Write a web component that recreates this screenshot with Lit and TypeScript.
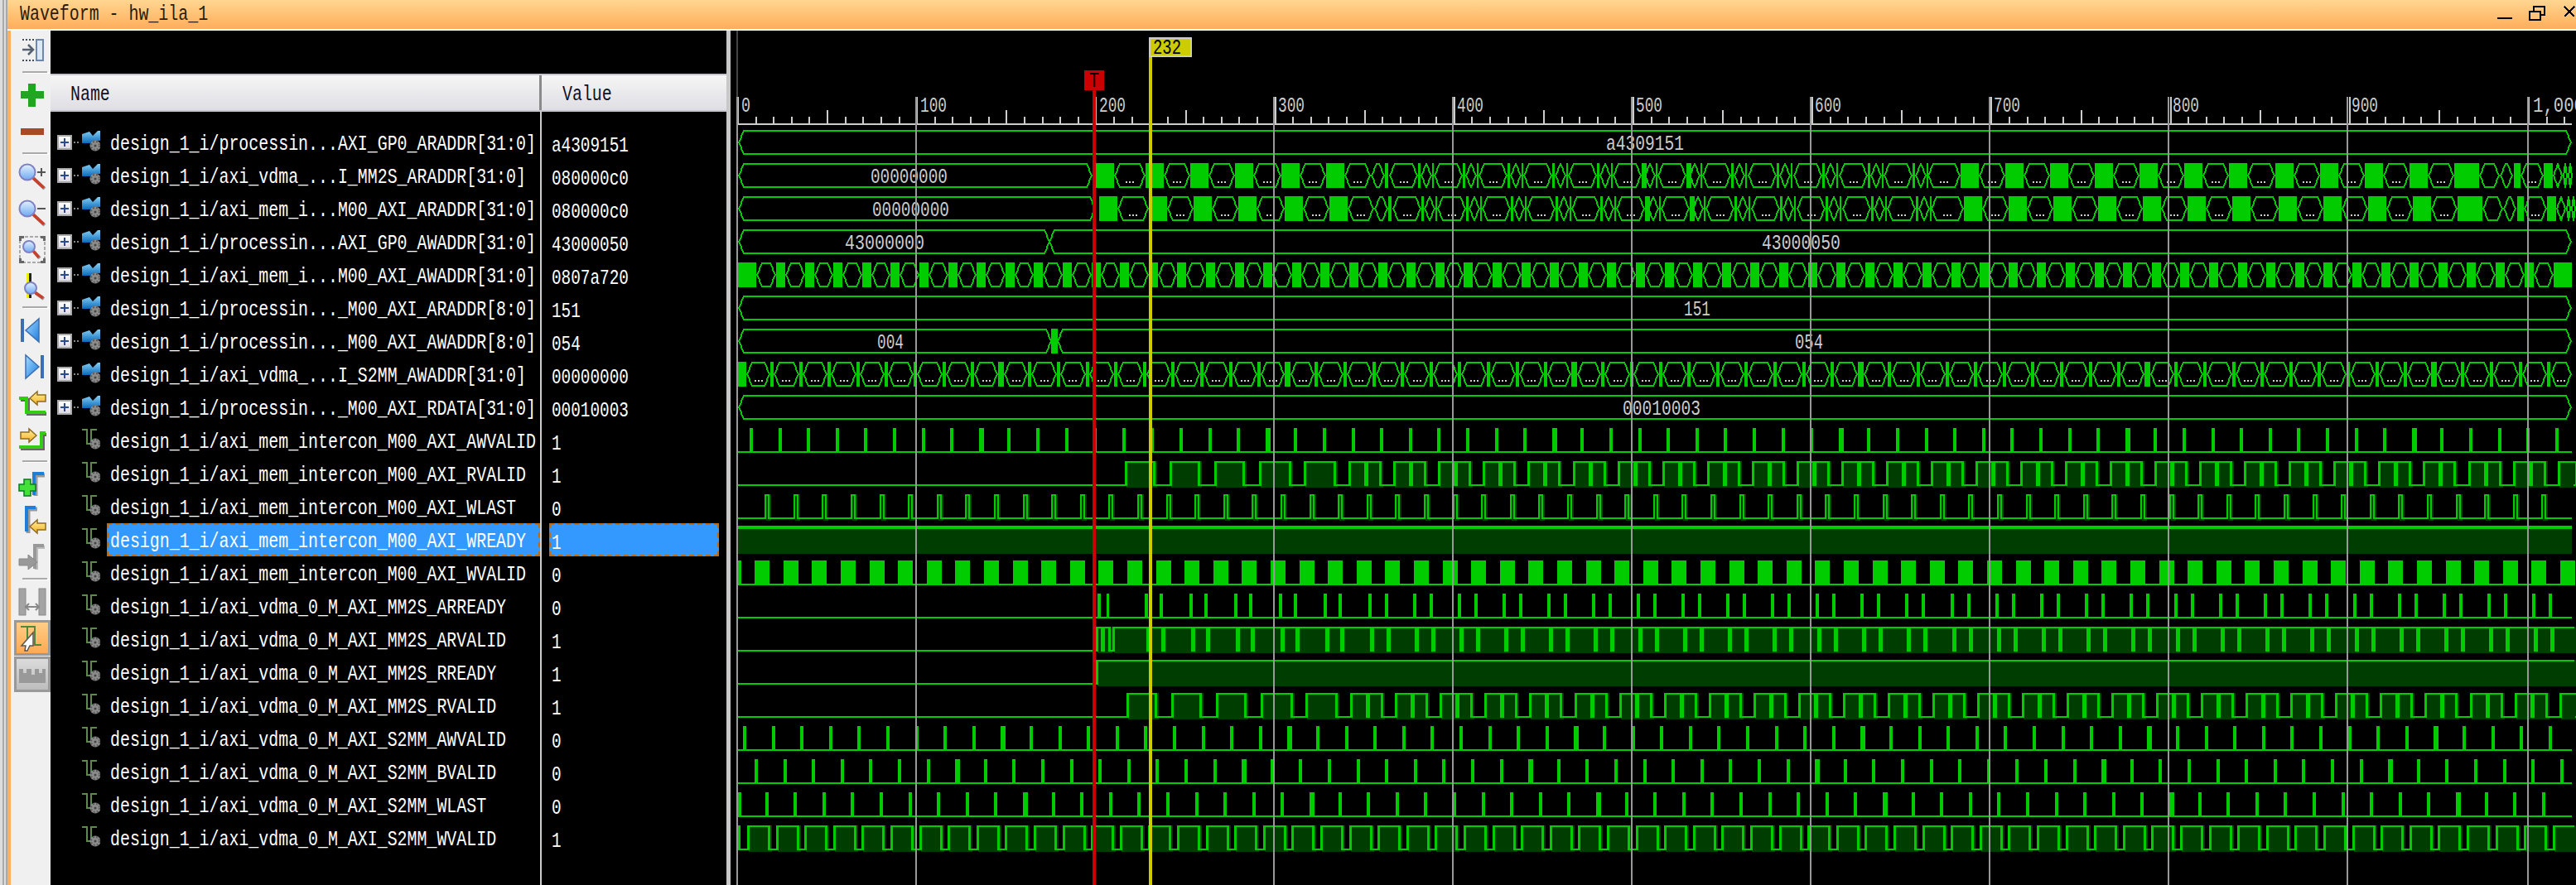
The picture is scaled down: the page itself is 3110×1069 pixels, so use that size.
import { html, svg, css, LitElement, SVGTemplateResult } from "lit";
import { customElement } from "lit/decorators.js";
import { classMap } from "lit/directives/class-map.js";

/* ---------- signal data ---------- */

interface Signal {
  name: string;
  value: string;
  bus?: boolean;
  selected?: boolean;
}

const SIGNALS: Signal[] = [
  { name: "design_1_i/processin...AXI_GP0_ARADDR[31:0]", value: "a4309151", bus: true },
  { name: "design_1_i/axi_vdma_...I_MM2S_ARADDR[31:0]", value: "080000c0", bus: true },
  { name: "design_1_i/axi_mem_i...M00_AXI_ARADDR[31:0]", value: "080000c0", bus: true },
  { name: "design_1_i/processin...AXI_GP0_AWADDR[31:0]", value: "43000050", bus: true },
  { name: "design_1_i/axi_mem_i...M00_AXI_AWADDR[31:0]", value: "0807a720", bus: true },
  { name: "design_1_i/processin..._M00_AXI_ARADDR[8:0]", value: "151", bus: true },
  { name: "design_1_i/processin..._M00_AXI_AWADDR[8:0]", value: "054", bus: true },
  { name: "design_1_i/axi_vdma_...I_S2MM_AWADDR[31:0]", value: "00000000", bus: true },
  { name: "design_1_i/processin..._M00_AXI_RDATA[31:0]", value: "00010003", bus: true },
  { name: "design_1_i/axi_mem_intercon_M00_AXI_AWVALID", value: "1" },
  { name: "design_1_i/axi_mem_intercon_M00_AXI_RVALID", value: "1" },
  { name: "design_1_i/axi_mem_intercon_M00_AXI_WLAST", value: "0" },
  { name: "design_1_i/axi_mem_intercon_M00_AXI_WREADY", value: "1", selected: true },
  { name: "design_1_i/axi_mem_intercon_M00_AXI_WVALID", value: "0" },
  { name: "design_1_i/axi_vdma_0_M_AXI_MM2S_ARREADY", value: "0" },
  { name: "design_1_i/axi_vdma_0_M_AXI_MM2S_ARVALID", value: "1" },
  { name: "design_1_i/axi_vdma_0_M_AXI_MM2S_RREADY", value: "1" },
  { name: "design_1_i/axi_vdma_0_M_AXI_MM2S_RVALID", value: "1" },
  { name: "design_1_i/axi_vdma_0_M_AXI_S2MM_AWVALID", value: "0" },
  { name: "design_1_i/axi_vdma_0_M_AXI_S2MM_BVALID", value: "0" },
  { name: "design_1_i/axi_vdma_0_M_AXI_S2MM_WLAST", value: "0" },
  { name: "design_1_i/axi_vdma_0_M_AXI_S2MM_WVALID", value: "1" },
];

/* ---------- waveform painter: everything is pixel rects, like the original ---------- */

const X0 = 891;
const XEND = 3105;
const P16 = 34.6;
const P25 = 54.05;
const top = (row: number) => 157 + row * 40;

class Painter {
  bright: string[] = [];
  dark: string[] = [];
  dots: string[] = [];
  labels: { row: number; text: string; x: number; w: number }[] = [];

  private rect(to: string[], x: number, y: number, w: number, h: number) {
    const x1 = Math.round(x);
    const x2 = Math.round(x + w);
    if (x2 > x1) to.push(`M${x1} ${y}h${x2 - x1}v${h}h${x1 - x2}z`);
  }
  line(x: number, y: number, w: number, h: number) {
    this.rect(this.bright, x, y, w, h);
  }
  shade(x: number, y: number, w: number, h: number) {
    this.rect(this.dark, x, y, w, h);
  }

  // value segment with tapered, stair-stepped ends
  hex(row: number, a: number, b: number, hasDots = false) {
    const t = top(row);
    const taper = Math.min(6, (b - a) / 2 - 1);
    this.line(a + taper, t, b - a - taper * 2, 2);
    this.line(a + taper, t + 28, b - a - taper * 2, 2);
    for (let y = 2; y < 28; y += 2) {
      const off = Math.round((taper * Math.abs(y - 14)) / 14);
      this.line(a + off, t + y, 2, 2);
      this.line(b - off - 2, t + y, 2, 2);
    }
    if (hasDots) {
      const mid = Math.round((a + b) / 2) - 5;
      for (let i = 0; i < 3; i++) this.rect(this.dots, mid + i * 4, t + 22, 2, 2);
    }
  }
  solid(row: number, a: number, b: number) {
    this.line(a, top(row), b - a, 30);
  }

  // a bit signal from its high spans; the dark shade sits 2px off the line
  bit(row: number, spans: number[][], vw = 3) {
    const t = top(row);
    let prev = X0;
    for (const [a, b] of spans) {
      this.line(prev, t + 28, a - prev, 2);
      this.shade(a + 2, t, b - a + vw, 32);
      this.line(a, t, b - a + vw, 2);
      this.line(a, t, vw, 30);
      if (b < XEND) this.line(b, t, vw, 30);
      prev = b;
    }
    if (prev < XEND) this.line(prev, t + 28, XEND - prev, 2);
  }
  pulses(row: number, base: number, thick: number) {
    const t = top(row);
    this.line(X0, t + 28, XEND - X0, 2);
    for (let k = 0; ; k++) {
      const x = base + k * P16;
      if (x > XEND - 2) break;
      this.line(x - 2, t, k % 10 === thick ? 6 : 4, 30);
    }
  }
}

function busAddr(p: Painter, row: number, d: number) {
  p.hex(row, X0, 1319 + d);
  const first = [1323, 1383, 1437, 1491, 1547, 1601];
  first.forEach((s, i) => {
    p.solid(row, s + d, s + 22 + d);
    p.hex(row, s + 22 + d, (first[i + 1] ?? 1655) + d, true);
  });
  p.hex(row, 1655 + d, 1672 + d);
  p.solid(row, 1672 + d, 1676 + d);
  const dense = [1682, 1736, 1790, 1844, 1898, 1952, 2006, 2060, 2115, 2170, 2225, 2279];
  dense.forEach((s, i) => {
    p.hex(row, s - 5 + d, s + 30 + d, true);
    p.solid(row, s + 30 + d, s + (i === 5 || i === 6 ? 36 : 33) + d);
    p.hex(row, s + 33 + d, s + 47 + d);
    p.solid(row, s + 47 + d, s + 49 + d);
  });
  p.hex(row, 2327 + d, 2367 + d, true);
  const last = [2367, 2421, 2475, 2529, 2583, 2637, 2691, 2747, 2801, 2855, 2909];
  last.forEach((s, i) => {
    p.solid(row, s + d, s + 22 + d);
    p.hex(row, s + 22 + d, (last[i + 1] ?? 2963) + d, true);
  });
  p.solid(row, 2963 + d, 2993 + d);
  p.hex(row, 2993 + d, 3018 + d);
  p.hex(row, 3018 + d, 3034 + d);
  p.solid(row, 3035 + d, 3043 + d);
  p.hex(row, 3043 + d, 3071 + d, true);
  p.solid(row, 3071 + d, 3082 + d);
  p.hex(row, 3082 + d, 3094 + d);
  p.hex(row, 3094 + d, 3100 + d);
  p.hex(row, 3100 + d, 3106 + d);
}

// handshake pattern: 25-clock period, with a small dip once the traffic settles
function validSpans(start: number) {
  const spans: number[][] = [];
  for (let k = 0; ; k++) {
    const a = start + k * P25;
    if (a > XEND - 8) break;
    if (k < 3) spans.push([a, a + 34]);
    else if (k < 5) spans.push([a, a + 36]);
    else {
      spans.push([a, a + 19]);
      spans.push([a + 21, Math.min(a + 37, XEND)]);
    }
  }
  return spans;
}

function paint(): Painter {
  const p = new Painter();

  p.hex(0, X0, XEND);
  p.labels.push({ row: 0, text: "a4309151", x: 1939, w: 94 });

  busAddr(p, 1, 0);
  p.labels.push({ row: 1, text: "00000000", x: 1051, w: 93 });
  busAddr(p, 2, 4);
  p.labels.push({ row: 2, text: "00000000", x: 1053, w: 93 });

  p.hex(3, X0, 1268);
  p.hex(3, 1266, XEND);
  p.labels.push({ row: 3, text: "43000000", x: 1020, w: 96 });
  p.labels.push({ row: 3, text: "43000050", x: 2127, w: 95 });

  p.solid(4, 890, 913);
  let prev = 913;
  for (let k = 0; k <= 61; k++) {
    const s = 937 + k * P16;
    p.hex(4, prev, s);
    p.solid(4, s, s + 11);
    prev = s + 11;
  }
  p.hex(4, prev, 3083);
  p.solid(4, 3083, XEND);

  p.hex(5, X0, XEND);
  p.labels.push({ row: 5, text: "151", x: 2033, w: 32 });

  p.hex(6, X0, 1270);
  p.solid(6, 1269, 1277);
  p.hex(6, 1276, XEND);
  p.labels.push({ row: 6, text: "004", x: 1059, w: 32 });
  p.labels.push({ row: 6, text: "054", x: 2167, w: 34 });

  p.solid(7, 890, 901);
  prev = 901;
  for (let k = 0; ; k++) {
    const c = 932 + k * P16;
    if (c > XEND) break;
    const half = k % 10 === 8 ? 3.5 : 2;
    p.hex(7, prev, c - half, true);
    p.solid(7, c - half, c + half);
    prev = c + half;
  }
  p.hex(7, prev, XEND, true);

  p.hex(8, X0, XEND);
  p.labels.push({ row: 8, text: "00010003", x: 1959, w: 94 });

  p.pulses(9, 907, 8);
  p.bit(10, validSpans(1358));

  const wlast: number[][] = [];
  for (let k = 1; ; k++) {
    const a = 888.6 + k * P16;
    if (a > XEND - 6) break;
    wlast.push([a, a + 4]);
  }
  p.bit(11, wlast, 2);

  // selected row: the top line is drawn thicker
  p.line(X0, top(12) - 2, XEND - X0, 4);
  p.shade(X0, top(12) + 2, XEND - X0, 30);

  p.line(X0, top(13) + 28, XEND - X0, 2);
  for (let k = 0; ; k++) {
    const a = 876.6 + k * P16;
    if (a > XEND) break;
    p.line(Math.max(a, X0), top(13), Math.min(18, a + 18 - X0), 30);
  }

  p.line(X0, top(14) + 28, XEND - X0, 2);
  p.line(1325, top(14), 4, 30);
  p.line(1336, top(14), 3, 30);
  const arvalid: number[][] = [
    [1323, 1329],
    [1331, 1338],
  ];
  let from = 1343;
  for (let k = 0; ; k++) {
    const a = 1381.6 + k * P25;
    if (a > XEND - 4) break;
    const off = k < 5 ? 18 : 20;
    p.line(a, top(14), 4, 30);
    if (a + off < XEND - 4) p.line(a + off, top(14), 4, 30);
    arvalid.push([from, a + 2]);
    arvalid.push([a + 4, a + off + 2]);
    from = a + off + 4;
  }
  arvalid.push([from, XEND]);
  p.bit(15, arvalid);

  p.bit(16, [[1323, XEND]]);
  p.bit(17, validSpans(1360));
  p.pulses(18, 899, 9);
  p.pulses(19, 913, 7);
  p.pulses(20, 891, 0);

  const wvalid: number[][] = [];
  for (let k = 0; ; k++) {
    const a = 902 + k * P16;
    if (a > XEND - 4) break;
    wvalid.push([a, Math.min(a + 25, XEND)]);
  }
  p.line(X0, top(21), 3, 30);
  p.bit(21, wvalid);

  return p;
}

/* ---------- waveform pane ---------- */

const GRID = [890, 1106, 1322, 1538, 1754, 1970, 2186, 2402, 2618, 2834, 3052];

@customElement("wave-view")
export class WaveView extends LitElement {
  static styles = css`
    :host {
      display: block;
      flex: 1;
      min-width: 0;
    }
    svg {
      display: block;
    }
    .num {
      font-family: "Liberation Mono", monospace;
      font-size: 26px;
    }
  `;

  private painter = paint();

  private ruler() {
    const d: string[] = [];
    for (let k = 0; k * 21.62 + 890 < XEND; k++) {
      const x = Math.round(890 + k * 21.62);
      const y = k % 10 === 0 ? 117 : k % 5 === 0 ? 133 : 141;
      d.push(`M${x} ${y}h2v${149 - y}h-2z`);
    }
    d.push(`M890 149H${XEND}v2H890z`);
    return d.join("");
  }

  private gridLabel(x: number, text: string, w: number) {
    return svg`<text class="num" x=${x} y="135" fill="#cccccc" textLength=${w} lengthAdjust="spacingAndGlyphs">${text}</text>`;
  }

  render() {
    const p = this.painter;
    return html`<svg width="2228" height="1032" viewBox="882 37 2228 1032" shape-rendering="crispEdges">
      <rect x="889" y="37" width="2" height="80" fill="#444"></rect>
      <path d=${p.dark.join("")} fill="#003d00"></path>
      <path d=${p.bright.join("")} fill="#00cc00"></path>
      <path d=${p.dots.join("")} fill="#d0d0d0"></path>
      ${p.labels.map(
        (l) => svg`<text class="num" x=${l.x} y=${top(l.row) + 24} fill="#cccccc" textLength=${l.w} lengthAdjust="spacingAndGlyphs">${l.text}</text>`
      )}
      <path d=${this.ruler()} fill="#cccccc"></path>
      ${GRID.map((x) => svg`<rect x=${x - 1} y="117" width="2" height="952" fill="#999999"></rect>`)}
      ${GRID.slice(0, 10).map((x, i) => this.gridLabel(x + 5, String(i * 100), i === 0 ? 11 : 32))}
      ${this.gridLabel(3058, "1,000", 62)}
      <rect x="1319" y="109" width="4" height="960" fill="#cc0000"></rect>
      <rect x="1309" y="85" width="24" height="24" fill="#cc0000"></rect>
      <text class="num" x="1315" y="105" fill="#000" textLength="12" lengthAdjust="spacingAndGlyphs">T</text>
      <rect x="1387" y="68" width="4" height="1001" fill="#cccc00"></rect>
      <rect x="1388" y="46" width="50" height="22" fill="#cccc00" stroke="#cccccc" stroke-width="2"></rect>
      <text class="num" x="1392" y="65" fill="#000" textLength="34" lengthAdjust="spacingAndGlyphs">232</text>
    </svg>`;
  }
}

/* ---------- left toolbar ---------- */

const gradDefs = svg`
  <linearGradient id="lens" x1="0" y1="0" x2="0" y2="1">
    <stop offset="0" stop-color="#e4f1fd"></stop><stop offset="1" stop-color="#6ea9f2"></stop>
  </linearGradient>
  <linearGradient id="tri" x1="0" y1="0" x2="1" y2="1">
    <stop offset="0" stop-color="#a5dcff"></stop><stop offset="1" stop-color="#1d7ce0"></stop>
  </linearGradient>
  <linearGradient id="arrow" x1="0" y1="0" x2="0" y2="1">
    <stop offset="0" stop-color="#fff0a0"></stop><stop offset="1" stop-color="#f5b020"></stop>
  </linearGradient>
  <linearGradient id="on" x1="0" y1="0" x2="0" y2="1">
    <stop offset="0" stop-color="#ffcf88"></stop><stop offset="1" stop-color="#ffa850"></stop>
  </linearGradient>
  <linearGradient id="off" x1="0" y1="0" x2="0" y2="1">
    <stop offset="0" stop-color="#dcdcdc"></stop><stop offset="1" stop-color="#bcbcbc"></stop>
  </linearGradient>`;

const lens = (cx: number, cy: number, r: number, hx: number, hy: number) => {
  const k = r * 0.72;
  return svg`
    <path d="M${cx + k} ${cy + k}L${hx} ${hy}" stroke="#9a9a9a" stroke-width="4" transform="translate(1 1)"></path>
    <path d="M${cx + k} ${cy + k}L${hx} ${hy}" stroke="#c9402a" stroke-width="3.5"></path>
    <circle cx=${cx} cy=${cy} r=${r} fill="url(#lens)" stroke="#8080c4" stroke-width="2"></circle>`;
};

const leftArrow = (x: number, y: number) => svg`
  <path transform="translate(${x} ${y})" d="M0 9L9 1V5H19V13H9V17Z" fill="url(#arrow)" stroke="#8e6c22" stroke-width="1.5"></path>`;

const ICONS: Record<string, SVGTemplateResult> = {
  stepIn: svg`
    <path d="M14 9H28M14 34H28" stroke="#444c5c" stroke-width="2" stroke-dasharray="2 2"></path>
    <path d="M14 21H27M21 15L27 21L21 27" stroke="#556070" stroke-width="2.5" fill="none"></path>
    <rect x="31" y="9" width="8" height="25" fill="#dbe8f5" stroke="#6f86ad" stroke-width="2"></rect>`,
  plus: svg`<path d="M21 8h9v9h10v9H30v10h-9V26H12v-9h9z" fill="#22a522"></path>`,
  minus: svg`<rect x="12" y="18" width="28" height="8" fill="#a64b25"></rect>`,
  zoomIn: svg`${lens(20, 17, 9.5, 40, 36)}<path d="M32 17h10M37 12v10" stroke="#555" stroke-width="2"></path>`,
  zoomOut: svg`${lens(20, 17, 9.5, 40, 36)}<path d="M32 17h10" stroke="#555" stroke-width="2"></path>`,
  zoomFit: svg`
    <rect x="11" y="7" width="30" height="31" fill="none" stroke="#aaa" stroke-width="2" stroke-dasharray="4 2"></rect>
    <path d="M10 6h6v3h-3v3h-3zM42 6v6h-3V9h-3V6zM10 39v-6h3v3h3v3zM42 39h-6v-3h3v-3h3z" fill="#666"></path>
    ${lens(22, 19, 7, 34, 32)}`,
  zoomCursor: svg`
    <rect x="19" y="7" width="3" height="30" fill="#f0f000"></rect>
    <rect x="22" y="7" width="3" height="30" fill="#222"></rect>
    ${lens(24, 25, 7, 39, 37)}`,
  first: svg`
    <rect x="12" y="8" width="4" height="28" fill="#3a6fb0"></rect>
    <path d="M18 22L34 8V36Z" fill="url(#tri)" stroke="#3a6fb0" stroke-width="1.5"></path>`,
  last: svg`
    <path d="M34 22L18 8V36Z" fill="url(#tri)" stroke="#3a6fb0" stroke-width="1.5"></path>
    <rect x="36" y="8" width="4" height="28" fill="#3a6fb0"></rect>`,
  prevEdge: svg`
    <path d="M12 18H21V35H43" fill="none" stroke="#666" stroke-width="4"></path>
    <path d="M10 16H19V33H42" fill="none" stroke="#33cc11" stroke-width="4"></path>
    ${leftArrow(23, 7)}`,
  nextEdge: svg`
    <path d="M12 33H39V16H43" fill="none" stroke="#666" stroke-width="4"></path>
    <path d="M10 31H37V14H42" fill="none" stroke="#33cc11" stroke-width="4"></path>
    <path transform="translate(12 8)" d="M19 9L10 1V5H0V13H10V17Z" fill="url(#arrow)" stroke="#8e6c22" stroke-width="1.5"></path>`,
  addMarker: svg`
    <path d="M30 36V11H41" fill="none" stroke="#999" stroke-width="5"></path>
    <path d="M28 35V9H40" fill="none" stroke="#1f7fd8" stroke-width="4"></path>
    <path d="M16 16h8v6h6v8h-6v6h-8v-6h-6v-8h6z" fill="#44e03a" stroke="#0a7a1e" stroke-width="1.5"></path>`,
  prevMarker: svg`
    <path d="M21 37V8H32" fill="none" stroke="#999" stroke-width="5"></path>
    <path d="M19 35V6H30" fill="none" stroke="#1f7fd8" stroke-width="4"></path>
    ${leftArrow(23, 20)}`,
  nextMarker: svg`
    <path d="M31 37V10H41" fill="none" stroke="#bbb" stroke-width="4"></path>
    <path d="M29 36V8H40" fill="none" stroke="#999" stroke-width="4"></path>
    <path d="M10 24H21V19L32 28L21 37V32H10Z" fill="#999" stroke="#8a8a8a"></path>`,
  swap: svg`
    <rect x="10" y="6" width="8" height="32" fill="#a4a4a4" stroke="#8a8a8a" stroke-width="1"></rect>
    <rect x="34" y="6" width="8" height="32" fill="#a4a4a4" stroke="#8a8a8a" stroke-width="1"></rect>
    <path d="M18 28H34M22 24L18 28L22 32M30 24L34 28L30 32" stroke="#888" stroke-width="2" fill="none"></path>`,
  cursorOn: svg`
    <rect x="5.5" y="1.5" width="41" height="40" fill="url(#on)" stroke="#999" stroke-width="3"></rect>
    <path d="M12 8H20V32M20 8H29V30H37" fill="none" stroke="#4f8a3a" stroke-width="2"></path>
    <path d="M27 15V31H23L20 37H17L18 31H13Z" fill="#fff" stroke="#555" stroke-width="1.5"></path>`,
  rulerOff: svg`
    <rect x="5.5" y="1.5" width="41" height="40" fill="url(#off)" stroke="#999" stroke-width="3"></rect>
    <path d="M10 15h5v5h4v-5h6v7h4v-7h5v5h4v-5h4v17H10z" fill="#999"></path>`,
};

const TOOLS = [
  ["stepIn"],
  ["plus", "minus"],
  ["zoomIn", "zoomOut", "zoomFit", "zoomCursor"],
  ["first", "last", "prevEdge", "nextEdge"],
  ["addMarker", "prevMarker", "nextMarker"],
  ["swap", "cursorOn", "rulerOff"],
];

@customElement("tool-strip")
export class ToolStrip extends LitElement {
  static styles = css`
    :host {
      display: block;
      width: 48px;
      flex: none;
      padding-top: 2px;
      background: #f0f0f0;
    }
    svg {
      display: block;
    }
    .Sep {
      width: 30px;
      height: 2px;
      margin: 3px 0 5px 14px;
      background: #aaaaaa;
      box-shadow: 2px 1px 0 #ffffff;
    }
  `;

  render() {
    return html`<svg width="0" height="0">${gradDefs}</svg>
      ${TOOLS.map(
        (group, i) => html`${i ? html`<div class="Sep"></div>` : ""}
        ${group.map((k) => html`<svg width="48" height="44" viewBox="0 0 48 44">${ICONS[k]}</svg>`)}`
      )}`;
  }
}

/* ---------- signal list ---------- */

const busIcon = html`<svg class="Glyph" width="22" height="25" viewBox="0 0 22 25">
  <defs>
    <linearGradient id="bus" x1="0" y1="0" x2="0" y2="1">
      <stop offset="0" stop-color="#86d0f4"></stop><stop offset="1" stop-color="#0a68bc"></stop>
    </linearGradient>
  </defs>
  <path d="M0 4L9 1L13 6L19 0H22V12H16L10 15H0Z" fill="url(#bus)"></path>
  <circle cx="16" cy="18" r="6.5" fill="#8c8c8c"></circle>
  <circle cx="16" cy="18" r="5" fill="none" stroke="#5a5a5a" stroke-width="2" stroke-dasharray="2 2"></circle>
  <circle cx="16" cy="18" r="1.5" fill="#444"></circle>
</svg>`;

const bitIcon = html`<svg class="Glyph" width="22" height="25" viewBox="0 0 22 25">
  <path d="M0 1H6V18H11V1H18" fill="none" stroke="#5c8a4a" stroke-width="2"></path>
  <circle cx="16" cy="18" r="6.5" fill="#8c8c8c"></circle>
  <circle cx="16" cy="18" r="5" fill="none" stroke="#5a5a5a" stroke-width="2" stroke-dasharray="2 2"></circle>
  <circle cx="16" cy="18" r="1.5" fill="#444"></circle>
</svg>`;

@customElement("signal-list")
export class SignalList extends LitElement {
  static styles = css`
    :host {
      display: block;
      width: 816px;
      flex: none;
      background: #000;
      font-family: "Liberation Mono", monospace;
    }
    .Head {
      display: flex;
      height: 46px;
      margin-top: 52px;
      box-sizing: border-box;
      border-top: 2px solid #c6c6ce;
      border-bottom: 2px solid #c6c6ce;
      background: #8a8a8a;
      color: #101028;
    }
    .Head-name,
    .Head-value {
      background: linear-gradient(#f6f6f6, #dedee4);
      height: 42px;
      padding-top: 1px;
      box-sizing: border-box;
    }
    .Head-name {
      width: 590px;
      padding-left: 24px;
    }
    .Head-value {
      flex: 1;
      margin-left: 3px;
      padding-left: 25px;
    }
    .Rows {
      height: 934px;
      padding-top: 17px;
      box-sizing: border-box;
      background: linear-gradient(#cccccc, #cccccc) no-repeat 591px 0 / 2px 100%;
    }
    .Row {
      display: flex;
      height: 40px;
      color: #fff;
    }
    .Gutter {
      display: flex;
      align-items: flex-start;
      width: 68px;
      flex: none;
      padding: 6px 0 0 8px;
      box-sizing: border-box;
    }
    .Expander {
      position: relative;
      width: 18px;
      height: 18px;
      margin-top: 5px;
      box-sizing: border-box;
      border: 2px solid #aaaaaa;
      background: linear-gradient(#ffffff, #dcdce4);
    }
    .Expander::before,
    .Expander::after {
      content: "";
      position: absolute;
      background: #2d4a8f;
    }
    .Expander::before {
      left: 2px;
      top: 6px;
      width: 10px;
      height: 2px;
    }
    .Expander::after {
      left: 6px;
      top: 2px;
      width: 2px;
      height: 10px;
    }
    .Leader {
      width: 8px;
      height: 2px;
      margin: 13px 2px 0 2px;
      background: repeating-linear-gradient(90deg, #888 0 2px, transparent 2px 4px);
    }
    .Glyph {
      display: block;
      flex: none;
    }
    .Plain {
      margin-left: 30px;
    }
    .Name {
      width: 523px;
      height: 40px;
      flex: none;
      padding-left: 4px;
      box-sizing: border-box;
    }
    .Value {
      width: 205px;
      height: 40px;
      flex: none;
      margin-left: 11px;
      padding-left: 3px;
      box-sizing: border-box;
    }
    .Picked {
      background: #3399ff;
      outline: 2px dashed #c06a10;
      outline-offset: -2px;
    }
    .Txt {
      display: inline-block;
      font-size: 26px;
      line-height: 44px;
      white-space: pre;
      transform-origin: 0 0;
    }
    .Name .Txt,
    .Head .Txt {
      transform: scaleX(0.766);
    }
    .Value .Txt {
      transform: scaleX(0.745);
      line-height: 48px;
    }
  `;

  render() {
    return html`<div class="Head">
        <div class="Head-name"><span class="Txt">Name</span></div>
        <div class="Head-value"><span class="Txt">Value</span></div>
      </div>
      <div class="Rows">
        ${SIGNALS.map(
          (s) => html`<div class="Row">
            <div class="Gutter">
              ${s.bus
                ? html`<div class="Expander"></div>
                    <div class="Leader"></div>
                    ${busIcon}`
                : html`<div class="Plain">${bitIcon}</div>`}
            </div>
            <div class=${classMap({ Name: true, Picked: !!s.selected })}><span class="Txt">${s.name}</span></div>
            <div class=${classMap({ Value: true, Picked: !!s.selected })}><span class="Txt">${s.value}</span></div>
          </div>`
        )}
      </div>`;
  }
}

/* ---------- page ---------- */

@customElement("app-root")
export class AppRoot extends LitElement {
  static styles = css`
    :host {
      display: flex;
      width: 3110px;
      height: 1069px;
      overflow: hidden;
      background: #000;
    }
    .Frame {
      width: 9px;
      flex: none;
      background: linear-gradient(
        90deg,
        #dddddd 0 3px,
        #aaaaaa 3px 5px,
        #dddddd 5px 7px,
        #a8a8a8 7px 9px
      );
    }
    .Main {
      flex: 1;
      display: flex;
      flex-direction: column;
      min-width: 0;
    }
    .Title {
      display: flex;
      justify-content: space-between;
      flex: none;
      height: 35px;
      padding-left: 15px;
      border-bottom: 2px solid #ffffff;
      background: linear-gradient(#ffd690, #ffad5b);
      overflow: hidden;
    }
    .Title-text {
      font: 26px/35px "Liberation Mono", monospace;
      color: #2a1c08;
      white-space: pre;
      transform: scaleX(0.766);
      transform-origin: 0 0;
    }
    .Controls {
      display: block;
      flex: none;
    }
    .Body {
      flex: 1;
      display: flex;
      min-height: 0;
      border-left: 4px solid #ffb05f;
    }
    .Sash {
      width: 5px;
      flex: none;
      background: #c8c8c8;
    }
  `;

  render() {
    return html`<div class="Frame"></div>
      <div class="Main">
        <div class="Title">
          <span class="Title-text">Waveform - hw_ila_1</span>
          <svg class="Controls" width="110" height="35" viewBox="3000 0 110 35" shape-rendering="crispEdges">
            <rect x="3015" y="21" width="18" height="2" fill="#000"></rect>
            <rect x="3059" y="8" width="13" height="10" fill="none" stroke="#000" stroke-width="2"></rect>
            <rect x="3054" y="14" width="13" height="10" fill="#ffc27a" stroke="#000" stroke-width="2"></rect>
            <path d="M3096 8L3108 20M3108 8L3096 20" stroke="#000" stroke-width="2" fill="none"></path>
          </svg>
        </div>
        <div class="Body">
          <tool-strip></tool-strip>
          <signal-list></signal-list>
          <div class="Sash"></div>
          <wave-view></wave-view>
        </div>
      </div>`;
  }
}

declare global {
  interface HTMLElementTagNameMap {
    "app-root": AppRoot;
    "wave-view": WaveView;
    "tool-strip": ToolStrip;
    "signal-list": SignalList;
  }
}
